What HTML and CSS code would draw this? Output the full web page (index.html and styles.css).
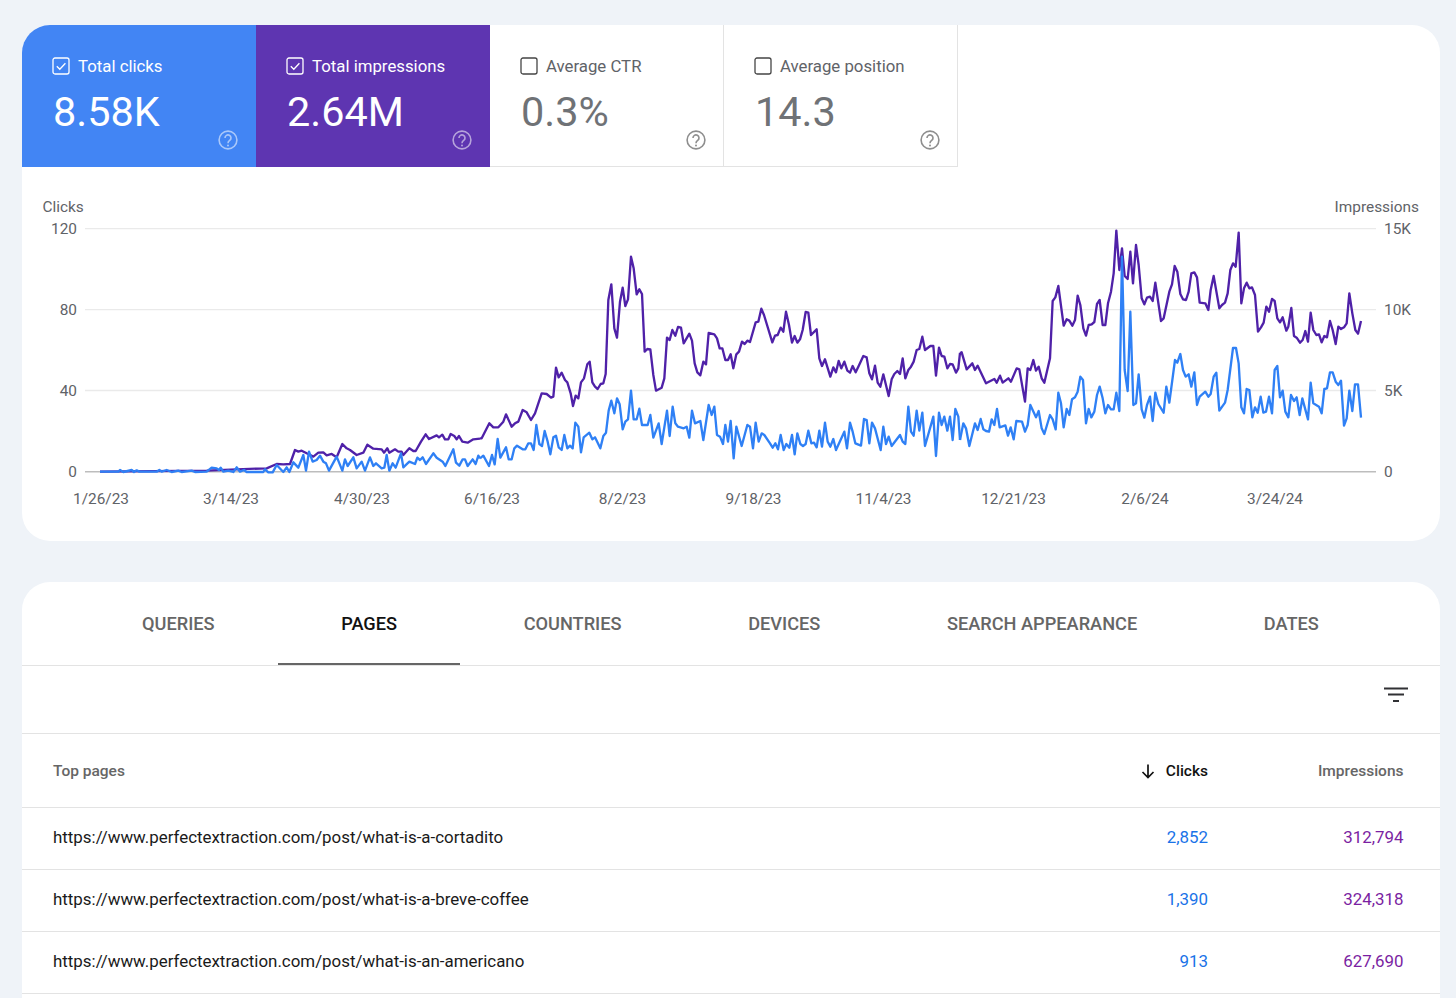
FILE: index.html
```html
<!DOCTYPE html>
<html lang="en">
<head>
<meta charset="utf-8">
<title>Search performance</title>
<link rel="stylesheet" href="styles.css">
</head>
<body>
<section class="card chart-card">
  <div class="metrics">
    <div class="metric metric-clicks">
      <div class="metric-label"><svg class="check" viewBox="0 0 18 18"><rect x="1" y="1" width="16" height="16" rx="2"/><path d="M4.8 9.2l3 3 5.6-6"/></svg>Total clicks</div>
      <div class="metric-value">8.58K</div>
      <svg class="help" viewBox="0 0 20 20"><circle cx="10" cy="10" r="8.9"/><path d="M7 8a3 3 0 1 1 4.7 2.4c-1.1.8-1.7 1.3-1.7 2.8"/><circle class="dot" cx="10" cy="15.4" r="1"/></svg>
    </div>
    <div class="metric metric-impr">
      <div class="metric-label"><svg class="check" viewBox="0 0 18 18"><rect x="1" y="1" width="16" height="16" rx="2"/><path d="M4.8 9.2l3 3 5.6-6"/></svg>Total impressions</div>
      <div class="metric-value">2.64M</div>
      <svg class="help" viewBox="0 0 20 20"><circle cx="10" cy="10" r="8.9"/><path d="M7 8a3 3 0 1 1 4.7 2.4c-1.1.8-1.7 1.3-1.7 2.8"/><circle class="dot" cx="10" cy="15.4" r="1"/></svg>
    </div>
    <div class="metric metric-off">
      <div class="metric-label"><svg class="check" viewBox="0 0 18 18"><rect x="1" y="1" width="16" height="16" rx="2"/></svg>Average CTR</div>
      <div class="metric-value">0.3%</div>
      <svg class="help" viewBox="0 0 20 20"><circle cx="10" cy="10" r="8.9"/><path d="M7 8a3 3 0 1 1 4.7 2.4c-1.1.8-1.7 1.3-1.7 2.8"/><circle class="dot" cx="10" cy="15.4" r="1"/></svg>
    </div>
    <div class="metric metric-off">
      <div class="metric-label"><svg class="check" viewBox="0 0 18 18"><rect x="1" y="1" width="16" height="16" rx="2"/></svg>Average position</div>
      <div class="metric-value">14.3</div>
      <svg class="help" viewBox="0 0 20 20"><circle cx="10" cy="10" r="8.9"/><path d="M7 8a3 3 0 1 1 4.7 2.4c-1.1.8-1.7 1.3-1.7 2.8"/><circle class="dot" cx="10" cy="15.4" r="1"/></svg>
    </div>
  </div>
  <svg class="chart" viewBox="22 167 1418 374" width="1418" height="374">
    <g class="grid">
      <line x1="85" x2="1376" y1="228.7" y2="228.7"/>
      <line x1="85" x2="1376" y1="309.6" y2="309.6"/>
      <line x1="85" x2="1376" y1="390.5" y2="390.5"/>
    </g>
    <line class="axis" x1="85" x2="1376" y1="471.7" y2="471.7"/>
    <g class="labels">
      <text x="42.5" y="212">Clicks</text>
      <text x="1419" y="212" class="end">Impressions</text>
      <text x="77" y="234" class="end">120</text>
      <text x="77" y="315" class="end">80</text>
      <text x="77" y="396" class="end">40</text>
      <text x="77" y="477" class="end">0</text>
      <text x="1384" y="234">15K</text>
      <text x="1384" y="315">10K</text>
      <text x="1384" y="396">5K</text>
      <text x="1384" y="477">0</text>
      <text x="101" y="504" class="mid">1/26/23</text>
      <text x="231" y="504" class="mid">3/14/23</text>
      <text x="362" y="504" class="mid">4/30/23</text>
      <text x="492" y="504" class="mid">6/16/23</text>
      <text x="622.500" y="504" class="mid">8/2/23</text>
      <text x="753.500" y="504" class="mid">9/18/23</text>
      <text x="883.500" y="504" class="mid">11/4/23</text>
      <text x="1013.500" y="504" class="mid">12/21/23</text>
      <text x="1145" y="504" class="mid">2/6/24</text>
      <text x="1275" y="504" class="mid">3/24/24</text>
    </g>
    <g class="purple">
      <polyline transform="translate(20 190) scale(.33333)" points="240,845 560,842 650,838 740,835 770,822 790,823 810,822 825,780 835,785 845,782 860,790 880,800 895,788 910,787 920,796 935,792 950,802 967,762 980,775 990,780 1010,795 1030,788 1042,764 1060,776 1085,778 1092,788 1102,775 1108,788 1125,778 1135,785 1145,785 1150,795 1168,775 1180,783 1187,783 1203,755 1217,733 1227,747 1250,736 1257,742 1267,734 1275,748 1285,748 1292,732 1303,738 1310,748 1317,738 1327,755 1343,758 1360,748 1380,746"/>
      <polyline transform="translate(480 220) scale(.33333)" points="0,655 5,655 28,610 40,622 55,622 70,605 78,583 95,620 105,610 115,605 128,570 140,577 153,600 165,580 185,520 200,522 213,533 220,530 228,443 236,472 245,458 255,480 262,487 272,520 279,558 287,527 295,535 303,487 312,475 322,433 329,425 337,487 345,500 353,507 362,492 370,490 377,462 385,240 394,193 403,325 411,353 420,245 428,203 436,258 444,238 453,110 461,145 470,223 478,208 486,222 494,395 502,387 511,388 520,465 528,512 545,503 553,475 561,353 569,360 577,330 586,347 594,321 603,323 611,370 628,341 636,362 644,430 652,457 661,466 670,425 678,433 686,339 703,343 711,355 719,385 727,385 736,420 744,420 752,403 760,445 769,403 777,395 786,365 794,372 802,362 810,366 827,307 835,305 844,266 852,285 877,367 885,347 893,345 902,323 910,335 918,275 927,315 936,368 944,348 952,368 960,358 968,330 977,276 985,278 993,345 1010,328 1018,415 1026,438 1035,418 1051,470 1060,442 1068,457 1076,423 1084,445 1093,425 1102,452 1110,458 1118,438 1127,457 1135,440 1150,408 1160,412 1168,460 1176,478 1185,437 1193,488 1201,500 1210,463 1226,528 1235,478 1243,462 1252,453 1260,462 1268,415 1276,475 1285,450 1293,440 1301,425 1310,390 1318,387 1327,350 1335,390 1351,378 1360,378 1368,467 1377,383 1385,408 1393,410 1402,445 1410,432 1418,433 1428,458 1435,445 1440,399"/>
      <polyline transform="translate(960 190) scale(.33333)" points="0,489 5,487 20,538 37,520 45,540 53,527 78,580 103,567 110,578 120,557 128,578 145,565 153,575 170,535 178,538 195,635 203,535 211,540 220,510 228,542 236,530 245,565 253,578 270,505 278,333 286,322 295,288 311,407 320,388 328,392 337,407 345,390 353,317 361,345 370,415 378,437 386,405 395,403 403,396 411,342 419,330 428,405 436,405 444,340 453,305 461,250 469,122 478,240 486,175 494,258 503,267 511,185 519,280 528,165 536,225 545,325 553,343 561,323 570,320 578,333 586,278 603,393 611,385 628,305 636,283 644,228 652,245 661,312 669,328 678,330 686,305 694,250 703,247 711,262 719,338 736,340 745,360 752,300 761,258 778,355 786,345 795,338 803,310 811,240 819,220 827,230 836,128 844,340 852,295 860,278 868,295 876,292 885,315 894,425 903,412 911,398 919,350 927,365 936,327 944,333 952,385 960,397 968,382 979,422 985,410 994,354 1002,438 1010,443 1020,458 1028,450 1036,423 1044,455 1052,368 1060,420 1069,435 1077,433 1085,457 1093,438 1101,442 1110,393 1118,420 1127,462 1135,410 1143,417 1152,412 1160,400 1168,310 1177,370 1186,420 1194,431 1203,393"/>
    </g>
    <g class="blue">
      <polyline transform="translate(20 190) scale(.33333)" points="240,845 295,845 300,840 310,846 335,840 342,846 350,841 358,845 410,845 418,840 425,845 440,840 455,846 475,842 485,846 515,842 525,846 560,845 575,833 590,835 597,840 602,833 610,845 625,842 640,846 650,832 660,845 672,840 680,846 730,846 735,838 745,847 758,847 770,825 790,846 800,832 808,846 820,817 835,833 850,795 858,842 867,785 878,815 890,810 900,797 910,815 918,820 927,842 950,800 967,842 975,808 983,828 1000,802 1010,835 1025,815 1035,842 1050,802 1060,828 1068,820 1085,835 1093,833 1100,795 1108,842 1118,820 1127,833 1143,790 1150,832 1168,815 1185,822 1192,803 1200,810 1208,802 1218,822 1240,790 1250,803 1268,815 1276,828 1300,778 1308,818 1318,827 1328,808 1335,808 1343,828 1358,808 1367,822 1375,797 1380,805"/>
      <polyline transform="translate(480 220) scale(.33333)" points="0,715 10,707 27,738 36,705 44,733 53,657 61,713 78,682 86,718 95,718 103,685 111,677 128,688 136,688 145,670 153,670 161,690 169,615 178,672 186,678 194,633 203,665 211,703 220,652 228,647 236,682 245,690 253,645 262,685 270,677 278,685 286,608 295,620 303,697 311,652 328,638 337,658 345,652 361,685 370,648 378,638 386,572 394,542 403,580 411,535 419,553 428,628 436,605 444,598 453,512 461,598 470,598 478,566 486,615 503,615 511,585 520,653 536,610 545,672 561,572 569,648 578,560 586,610 594,620 611,625 620,620 628,653 636,572 645,610 661,603 670,660 686,555 695,585 703,560 711,645 720,650 729,672 736,615 744,665 752,603 761,715 769,620 785,678 802,615 810,620 819,685 827,608 836,665 845,640 853,645 870,670 878,683 886,670 894,688 902,645 911,690 919,672 928,683 936,645 944,703 952,640 961,672 969,678 977,672 985,632 994,670 1002,668 1010,682 1018,632 1026,680 1035,608 1043,665 1051,680 1060,657 1068,690 1093,635 1101,685 1110,608 1118,635 1126,670 1143,677 1152,597 1160,600 1168,670 1176,608 1185,625 1202,690 1210,620 1218,672 1226,650 1235,678 1260,645 1268,665 1276,672 1285,560 1293,635 1301,647 1310,572 1318,632 1327,578 1335,678 1360,590 1368,708 1377,578 1385,615 1393,590 1402,632 1410,590 1418,660 1426,567 1435,590 1440,660"/>
      <polyline transform="translate(960 190) scale(.33333)" points="0,750 10,700 18,715 28,768 45,700 53,720 62,687 70,718 78,723 87,725 95,688 103,705 111,657 119,712 136,706 144,737 152,712 161,748 169,693 186,695 195,725 203,705 211,645 228,682 236,663 245,715 253,732 270,675 278,688 287,718 295,608 303,640 311,712 320,657 328,675 336,628 345,622 353,605 361,560 369,570 378,700 386,657 394,682 403,665 411,615 419,590 428,625 436,670 444,645 453,658 461,658 469,608 478,663 486,200 494,540 503,603 511,365 520,645 528,640 536,553 545,658 553,683 561,645 570,620 578,693 586,608 595,642 611,668 619,590 628,638 645,510 652,518 661,492 669,540 677,560 686,553 694,590 703,547 711,645 719,620 736,605 745,620 752,612 761,560 769,548 778,662 795,638 803,600 819,474 828,474 836,520 844,652 852,670 860,597 868,600 877,682 885,652 893,668 902,620 910,668 918,665 927,620 936,670 944,540 952,528 960,622 968,602 976,665 985,682 993,615 1002,633 1010,622 1019,675 1027,625 1044,688 1052,578 1060,640 1077,650 1085,670 1093,597 1101,595 1110,547 1118,547 1127,575 1135,585 1143,572 1152,707 1160,685 1168,602 1177,663 1185,583 1194,583 1203,683"/>
    </g>
  </svg>
</section>

<section class="card table-card">
  <nav class="tabs">
    <a class="tab">QUERIES</a>
    <a class="tab tab-active">PAGES</a>
    <a class="tab">COUNTRIES</a>
    <a class="tab">DEVICES</a>
    <a class="tab">SEARCH APPEARANCE</a>
    <a class="tab">DATES</a>
  </nav>
  <div class="toolbar">
    <svg class="filter" viewBox="0 0 24 16"><path d="M0 1.500h24M4 7.500h16M9 14h6"/></svg>
  </div>
  <div class="row head">
    <div>Top pages</div>
    <div class="num sorted"><svg class="arrow" viewBox="0 0 16 16"><path d="M8 1.500v13M2.500 9l5.500 5.500L13.500 9"/></svg>Clicks</div>
    <div class="num">Impressions</div>
  </div>
  <div class="row body-row">
    <div>https://www.perfectextraction.com/post/what-is-a-cortadito</div>
    <div class="num clicks">2,852</div>
    <div class="num impr">312,794</div>
  </div>
  <div class="row body-row">
    <div>https://www.perfectextraction.com/post/what-is-a-breve-coffee</div>
    <div class="num clicks">1,390</div>
    <div class="num impr">324,318</div>
  </div>
  <div class="row body-row">
    <div>https://www.perfectextraction.com/post/what-is-an-americano</div>
    <div class="num clicks">913</div>
    <div class="num impr">627,690</div>
  </div>
</section>
</body>
</html>
```
FILE: styles.css
```css
* { box-sizing: border-box; }
html, body { height: 998px; overflow: hidden; }
body {
  margin: 0;
  padding: 25px 16px 0 22px;
  background: #eff3f8;
  font-family: Roboto, "Liberation Sans", sans-serif;
  display: flex;
  flex-direction: column;
  gap: 41px;
}
.card { background: #fff; overflow: hidden; flex: none; }
.chart-card { height: 516px; border-radius: 28px; }
.table-card { height: 420px; border-radius: 28px 28px 0 0; }

.metrics { display: flex; height: 142px; }
.metric {
  width: 234px;
  padding: 29.500px 30px 0;
  position: relative;
  color: #fff;
}
.metric-clicks { background: #4285f4; }
.metric-impr { background: #5e35b1; }
.metric-off {
  color: #5f6368;
  border-right: 1px solid #e3e3e3;
  border-bottom: 1px solid #e3e3e3;
}
.metric-label {
  display: flex;
  align-items: center;
  gap: 8px;
  font-size: 16.800px;
  line-height: 22px;
}
.check { width: 18px; height: 18px; flex: none; fill: none; stroke: currentColor; stroke-width: 1.300; }
.metric-off .check { stroke: #444; }
.metric-value {
  font-size: 41.400px;
  line-height: 50px;
  margin: 10px 0 0 1px;
}
.metric-off .metric-value { color: #6f7276; }
.help {
  position: absolute;
  right: 18px;
  bottom: 17.500px;
  width: 20px;
  height: 20px;
  fill: none;
  stroke: currentColor;
  stroke-width: 1.600;
  opacity: .55;
}
.metric-off .help { color: #333; right: 17px; bottom: 16.500px; }
.help .dot { fill: currentColor; stroke: none; }

.chart { display: block; margin-top: 0; }
.grid line { stroke: #eaeaea; stroke-width: 1.300; }
.axis { stroke: #bdbdbd; stroke-width: 1.500; }
.labels text { font-size: 15.400px; fill: #5f6368; font-family: Roboto, sans-serif; }
.labels .end { text-anchor: end; }
.labels .mid { text-anchor: middle; }
.purple polyline, .blue polyline { fill: none; stroke-width: 7; stroke-linejoin: round; }
.purple polyline { stroke: #4f21a8; }
.blue polyline { stroke: #2f80f5; }

.tabs {
  display: flex;
  padding-left: 56.700px;
  height: 84px;
  border-bottom: 1px solid #e3e3e3;
}
.tab {
  padding: 0 63.300px;
  font-size: 18.200px;
  font-weight: 500;
  line-height: 83px;
  color: #666;
  height: 83px;
}
.tab-active { color: #111; border-bottom: 2px solid #666; }

.toolbar {
  height: 68px;
  display: flex;
  align-items: center;
  justify-content: flex-end;
  padding: 0 32px 10px 0;
  border-bottom: 1px solid #e3e3e3;
}
.filter { width: 24px; height: 16px; fill: none; stroke: #303134; stroke-width: 2.200; }

.row {
  display: grid;
  grid-template-columns: 1fr 175px 195.500px;
  align-items: center;
  padding: 0 36.500px 0 31px;
  border-bottom: 1px solid #e3e3e3;
}
.num { text-align: right; }
.head { height: 74px; font-size: 15.500px; font-weight: 500; color: #666; }
.sorted {
  color: #111;
  display: flex;
  justify-content: flex-end;
  align-items: center;
  gap: 10px;
}
.arrow { width: 16px; height: 16px; fill: none; stroke: #111; stroke-width: 1.700; }
.body-row { height: 62px; padding-bottom: 3px; font-size: 16.900px; color: #1a1a1a; }
.clicks { color: #1a73e8; }
.impr { color: #7b1fa2; }
```
